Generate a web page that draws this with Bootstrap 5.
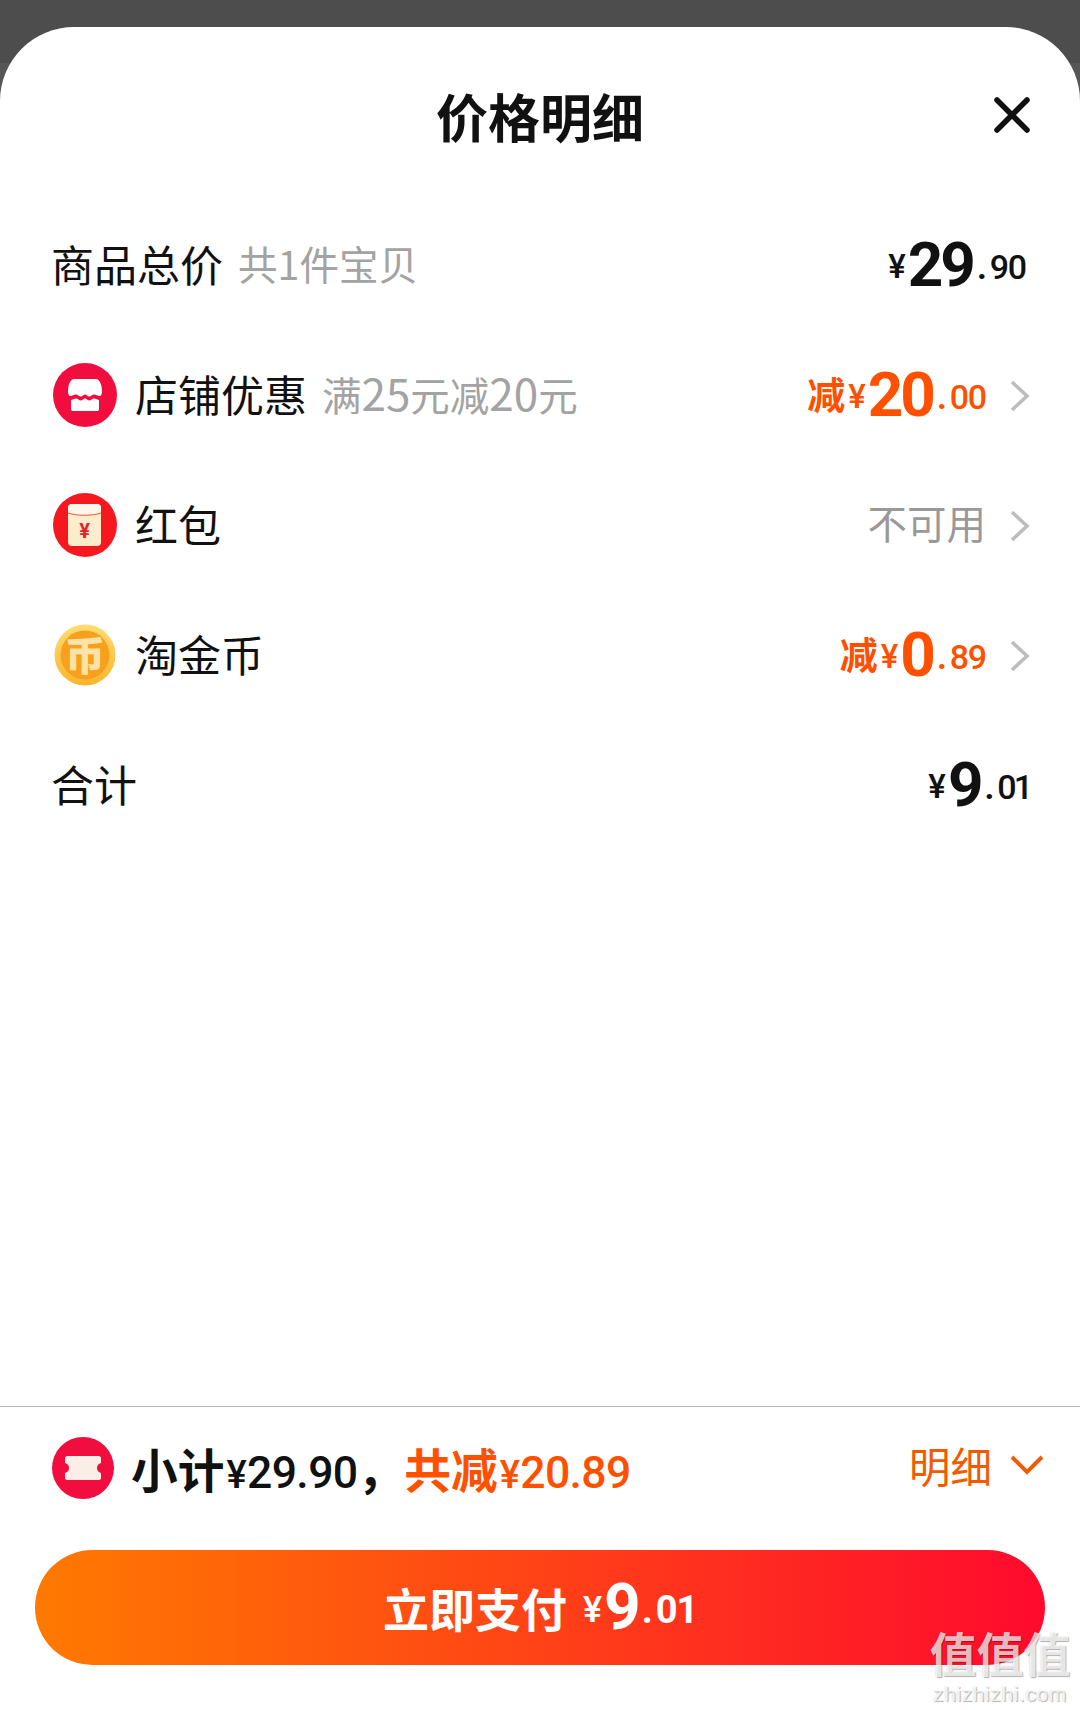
<!DOCTYPE html>
<html lang="zh">
<head>
<meta charset="utf-8">
<title>价格明细</title>
<link href="https://cdn.jsdelivr.net/npm/bootstrap@5.3.0/dist/css/bootstrap.min.css" rel="stylesheet">
<style>
html,body{height:1710px;margin:0;overflow:hidden}
body{background:linear-gradient(#4d4d4d 0 63px,#565656 63px);font-family:"Noto Sans CJK SC","Liberation Sans",sans-serif;color:#111;position:relative}
.sheet{margin-top:27px;height:1683px;background:#fff;border-radius:74px 74px 0 0}
.sheet-head{display:grid;grid-template-columns:1fr auto 1fr;height:173px;padding-top:54px;align-items:start}
.sheet-title{font-size:52px;line-height:70px;font-weight:700;margin:0}
.close-cell{padding:16px 50px 0 0}
.pr-row{height:130px;padding:0 50px 0 51px}
.lbl{font-size:43px;line-height:60px;color:#111;padding-bottom:4px}
.sub{font-size:39.5px;line-height:60px;color:#a3a3a3;margin-left:15px;padding-bottom:4px}
.sd{font-size:44px}
.ic{width:64px;height:64px;margin:0 18px 0 2px;flex:none}
.amt{font-family:Roboto,"Liberation Sans",sans-serif;display:flex;align-items:center;color:#111;font-weight:500;line-height:60px}
.amt-end{margin-right:4px}
.amt-flush{margin-right:0}
.yen{font-size:33px;font-weight:500;margin:4px 2px 0 0}
.big{font-size:62px;font-weight:700;letter-spacing:-3px;margin-right:4px}
.dec{font-size:34px;font-weight:500;letter-spacing:-1.2px;margin-top:4px}
.dec i{font-style:normal;font-weight:700;margin-right:3px;letter-spacing:0}
.tight{letter-spacing:-3px}
.jian{font-family:"Noto Sans CJK SC",sans-serif;font-size:38px;font-weight:700;margin:0 3px 4px 0}
.orange{color:#ff5000}
.na{font-size:39.5px;line-height:60px;color:#999;padding-bottom:6px}
.chev{width:20px;height:32px;margin:2px 0 0 24px;flex:none}
.foot{border-top:1px solid #b8b8b8;height:304px}
.total-row{height:122px;padding:0 36px 0 52px;margin-bottom:21px}
.total-txt{font-size:46.7px;line-height:60px;font-weight:700;white-space:nowrap;color:#111;padding-top:6px}
.num{font-family:Roboto,"Liberation Sans",sans-serif;font-size:44.5px;font-weight:500;letter-spacing:-.6px}
.ny{font-size:38px;margin:0 1px 0 2px}
.ic-s{width:62px;height:62px;margin-right:17px;flex:none}
.det{font-size:41.5px;line-height:60px;color:#f25a00;padding-bottom:6px}
.chev-d{width:34px;height:22px;margin:0 0 6px 18px;flex:none}
.pay-wrap{padding:0 35px}
.pay{height:115px;border:0;background:linear-gradient(90deg,#ff7a00,#ff0a2e);color:#fff;font-size:46px;font-weight:700;display:flex;align-items:center;justify-content:center;padding:0}
.pay:hover,.pay:active{background:linear-gradient(90deg,#ff7a00,#ff0a2e)!important;color:#fff!important}
.pay .amt{color:#fff;margin-left:16px}
.pay .big{font-size:64px}
.pay .dec{font-size:38px;font-weight:700}
.pay .yen{font-size:36px}
.wm{position:absolute;right:9px;bottom:5px;width:142px;text-align:center;color:rgba(255,255,255,.72);text-shadow:1px 1px 1px rgba(0,0,0,.3),-1px 0 1px rgba(0,0,0,.08);pointer-events:none;line-height:1}
.wm-a{font-size:47px;font-weight:700;line-height:52px;white-space:nowrap}
.wm-b{font-family:"Liberation Sans",sans-serif;font-size:21px;line-height:22px;letter-spacing:.6px;margin-top:5px;white-space:nowrap}
</style>
</head>
<body>
<main class="sheet d-flex flex-column">
  <header class="sheet-head">
    <div></div>
    <h1 class="sheet-title">价格明细</h1>
    <div class="close-cell d-flex justify-content-end">
      <svg width="36" height="36" viewBox="0 0 36 36" aria-label="关闭"><path d="M3 3 33 33M33 3 3 33" stroke="#111" stroke-width="5.500" stroke-linecap="round" fill="none"/></svg>
    </div>
  </header>

  <section>
    <div class="pr-row d-flex align-items-center justify-content-between">
      <div class="d-flex align-items-center"><span class="lbl">商品总价</span><span class="sub">共1件宝贝</span></div>
      <div class="amt amt-end"><span class="yen">¥</span><span class="big">29</span><span class="dec"><i>.</i>90</span></div>
    </div>

    <div class="pr-row d-flex align-items-center justify-content-between">
      <div class="d-flex align-items-center">
        <svg class="ic" viewBox="0 0 64 64"><circle cx="32" cy="32" r="32" fill="#f20d3f"/><path d="M21 16H43C46.500 16 49 22 49 28C49 31.500 48 33 46.500 33C45 33 43 31.500 41 31.500C39 31.500 38 33.500 36.500 33.500C34.500 33.500 33.500 31.500 32 31.500C30.500 31.500 29.500 33.500 27.500 33.500C26 33.500 25 31.500 23 31.500C21 31.500 19 33 17.500 33C16 33 15 31.500 15 28C15 22 17.500 16 21 16Z" fill="#fff"/><path d="M18 37C19.500 37 21 35.500 23 35.500C25 35.500 26 37.500 27.500 37.500C29.500 37.500 30.500 35.500 32 35.500C33.500 35.500 34.500 37.500 36.500 37.500C38 37.500 39 35.500 41 35.500C43 35.500 44.500 37 46 37V46C46 47.500 45 48 44 48H20C19 48 18 47.500 18 46Z" fill="#fff"/></svg>
        <span class="lbl">店铺优惠</span><span class="sub">满<span class="sd">25</span>元减<span class="sd">20</span>元</span>
      </div>
      <div class="d-flex align-items-center">
        <div class="amt orange"><span class="jian">减</span><span class="yen">¥</span><span class="big">20</span><span class="dec"><i>.</i>00</span></div>
        <svg class="chev" viewBox="0 0 20 32"><path d="M2 2 17 16 2 30" fill="none" stroke="#bdbdbd" stroke-width="3.500"/></svg>
      </div>
    </div>

    <div class="pr-row d-flex align-items-center justify-content-between">
      <div class="d-flex align-items-center">
        <svg class="ic" viewBox="0 0 64 64"><circle cx="32" cy="32" r="32" fill="#f5181f"/><rect x="15" y="11" width="33" height="42" rx="4" fill="#fbeccb"/><path d="M15 15C15 12.500 17 11 19 11H44C46 11 48 12.500 48 15V20C40 23 23 23 15 20Z" fill="#fff6ea"/><path d="M15 20C23 23 40 23 48 20" fill="none" stroke="#e9533d" stroke-width="1"/><text x="31.500" y="45" text-anchor="middle" font-size="20" font-weight="700" font-family="Roboto,sans-serif" fill="#e3242b">¥</text></svg>
        <span class="lbl">红包</span>
      </div>
      <div class="d-flex align-items-center">
        <span class="na">不可用</span>
        <svg class="chev" viewBox="0 0 20 32"><path d="M2 2 17 16 2 30" fill="none" stroke="#bdbdbd" stroke-width="3.500"/></svg>
      </div>
    </div>

    <div class="pr-row d-flex align-items-center justify-content-between">
      <div class="d-flex align-items-center">
        <svg class="ic" viewBox="0 0 64 64"><defs><linearGradient id="cg" x1="0" y1="0" x2="0" y2="1"><stop offset="0" stop-color="#ffdc72"/><stop offset="1" stop-color="#fbb52c"/></linearGradient></defs><circle cx="32" cy="32" r="30.500" fill="url(#cg)"/><circle cx="32" cy="32" r="24.500" fill="#f7a01e"/><text x="32" y="47" text-anchor="middle" font-size="39" font-weight="700" font-family="Noto Sans CJK SC,sans-serif" fill="#fde3a9" stroke="#fde3a9" stroke-width="1.200">币</text></svg>
        <span class="lbl">淘金币</span>
      </div>
      <div class="d-flex align-items-center">
        <div class="amt orange"><span class="jian">减</span><span class="yen">¥</span><span class="big">0</span><span class="dec"><i>.</i>89</span></div>
        <svg class="chev" viewBox="0 0 20 32"><path d="M2 2 17 16 2 30" fill="none" stroke="#bdbdbd" stroke-width="3.500"/></svg>
      </div>
    </div>

    <div class="pr-row d-flex align-items-center justify-content-between">
      <span class="lbl">合计</span>
      <div class="amt amt-flush"><span class="yen">¥</span><span class="big">9</span><span class="dec tight"><i>.</i>01</span></div>
    </div>
  </section>

  <div class="flex-grow-1"></div>

  <footer class="foot">
    <div class="total-row d-flex align-items-center justify-content-between">
      <div class="d-flex align-items-center">
        <svg class="ic-s" viewBox="0 0 62 62"><circle cx="31" cy="31" r="31" fill="#f20d3f"/><path d="M15 19H47C48 19 49 20 49 21V26C46.500 26.500 45 28.500 45 31C45 33.500 46.500 35.500 49 36V41C49 42 48 43 47 43H15C14 43 13 42 13 41V36C15.500 35.500 17 33.500 17 31C17 28.500 15.500 26.500 13 26V21C13 20 14 19 15 19Z" fill="#fbeee6"/></svg>
        <div class="total-txt">小计<span class="num"><span class="ny">¥</span>29.90</span>，<span class="orange">共减<span class="num"><span class="ny">¥</span>20.89</span></span></div>
      </div>
      <div class="d-flex align-items-center">
        <span class="det">明细</span>
        <svg class="chev-d" viewBox="0 0 34 22"><path d="M2 3 17 18 32 3" fill="none" stroke="#f25a00" stroke-width="4"/></svg>
      </div>
    </div>
    <div class="pay-wrap">
      <button type="button" class="btn pay w-100 rounded-pill">立即支付<span class="amt"><span class="yen">¥</span><span class="big">9</span><span class="dec"><i>.</i>01</span></span></button>
    </div>
  </footer>
</main>
<div class="wm"><div class="wm-a">值值值</div><div class="wm-b">zhizhizhi.com</div></div>
<script src="https://cdn.jsdelivr.net/npm/bootstrap@5.3.0/dist/js/bootstrap.bundle.min.js"></script>
</body>
</html>
